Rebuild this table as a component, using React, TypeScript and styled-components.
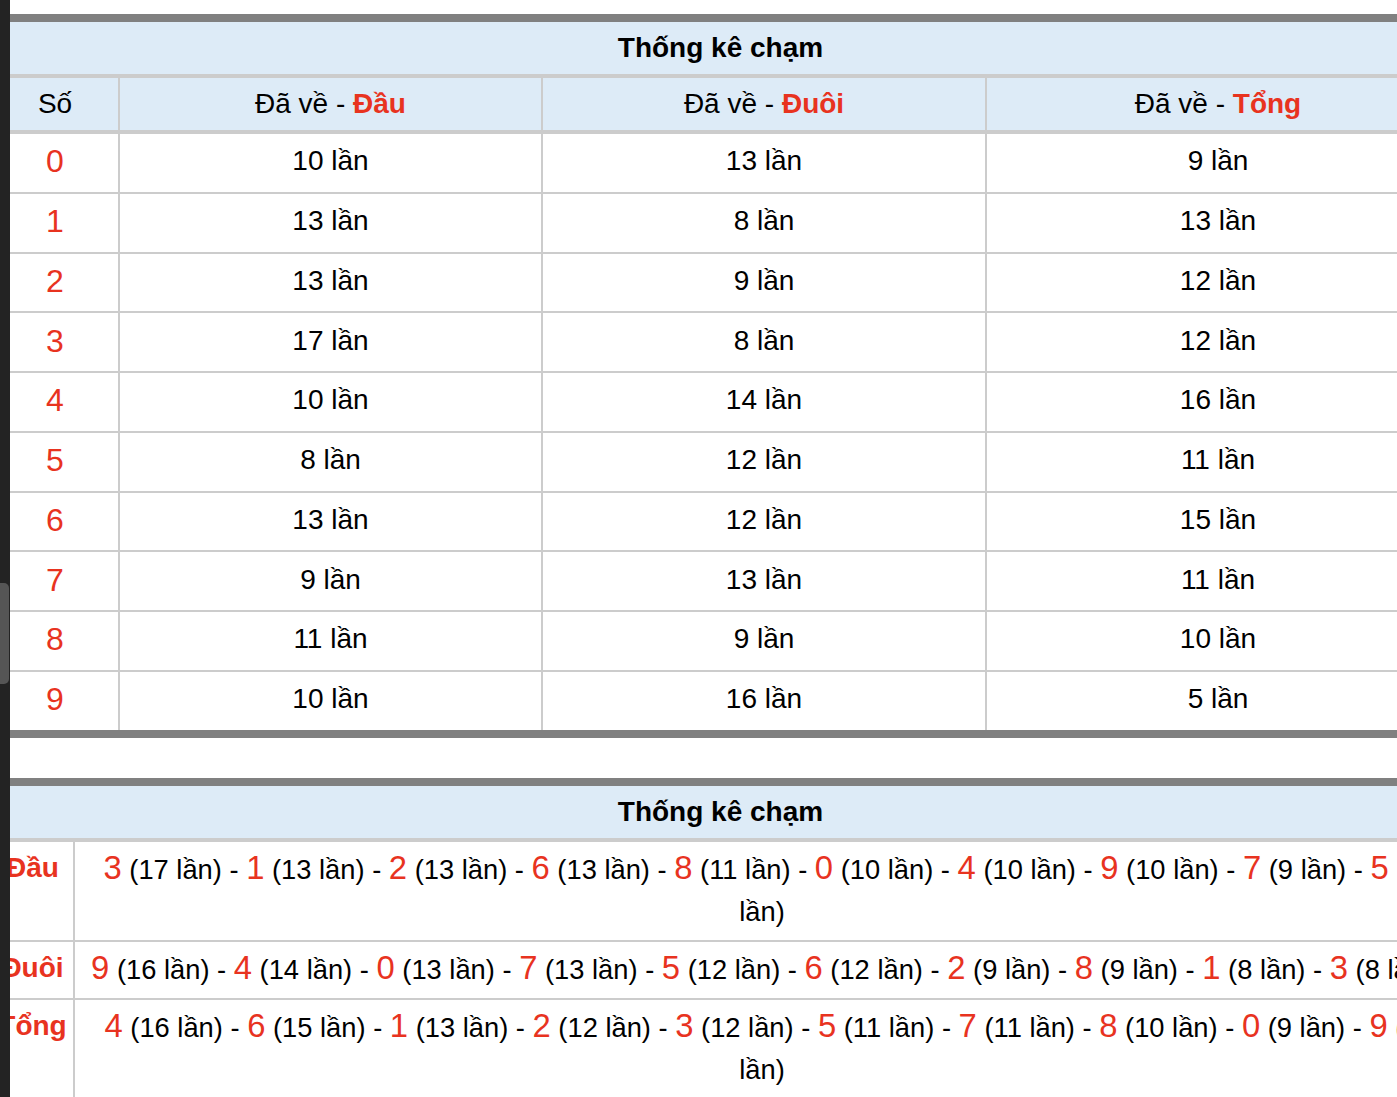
import React from "react";
import styled, { createGlobalStyle } from "styled-components";

const RED = "#e8331f";
const BLUE = "#ddebf7";
const GRID = "#cccccc";
const BAR = "#808080";

const GlobalStyle = createGlobalStyle`
  html, body {
    margin: 0;
    padding: 0;
    background: #ffffff;
    overflow: hidden;
  }
  body {
    font-family: "Liberation Sans", Arial, Helvetica, sans-serif;
    color: #000;
  }
`;

const Page = styled.div`
  width: 1457px;
  margin-left: -8px;
  padding-top: 14px;
  display: flex;
  flex-direction: column;
  gap: 40px;
`;

const EdgeStrip = styled.div`
  position: fixed;
  left: 0;
  top: 0;
  width: 10px;
  height: 100%;
  background: #232323;
  z-index: 5;
`;

const EdgeThumb = styled.div`
  position: absolute;
  left: 0;
  top: 583px;
  width: 9px;
  height: 101px;
  background: #555555;
  border-radius: 0 5px 5px 0;
`;

const Table = styled.table<{ $open?: boolean }>`
  width: 1457px;
  table-layout: fixed;
  border-collapse: separate;
  border-spacing: 0;
  border-top: 8px solid ${BAR};
  border-bottom: ${(p) => (p.$open ? "none" : `8px solid ${BAR}`)};
`;

const Col = styled.col<{ $w: number }>`
  width: ${(p) => p.$w}px;
`;

const TitleCell = styled.th`
  background: ${BLUE};
  font-size: 28px;
  font-weight: 700;
  line-height: 52px;
  padding: 0;
  text-align: center;
  border-bottom: 4px solid ${GRID};
`;

const HeadCell = styled.th<{ $first?: boolean }>`
  box-sizing: border-box;
  background: ${BLUE};
  font-size: 28px;
  font-weight: 400;
  line-height: 52px;
  padding: 0;
  text-align: center;
  white-space: nowrap;
  border-bottom: 4px solid ${GRID};
  border-left: ${(p) => (p.$first ? "none" : `2px solid ${GRID}`)};
`;

const Accent = styled.span`
  color: ${RED};
  font-weight: 700;
`;

const DataCell = styled.td<{ $first?: boolean; $last?: boolean }>`
  box-sizing: content-box;
  height: 54.75px;
  font-size: 28px;
  line-height: 1;
  padding: 0 0 3px;
  text-align: center;
  vertical-align: middle;
  white-space: nowrap;
  border-bottom: ${(p) => (p.$last ? "none" : `2px solid ${GRID}`)};
  border-left: ${(p) => (p.$first ? "none" : `2px solid ${GRID}`)};
`;

const Num = styled.span<{ $size: number }>`
  color: ${RED};
  font-size: ${(p) => p.$size}px;
  line-height: 1;
`;

const LabelCell = styled.th<{ $last?: boolean }>`
  box-sizing: border-box;
  color: ${RED};
  font-size: 28px;
  font-weight: 700;
  line-height: 42px;
  padding: 5px 0 7px;
  text-align: center;
  vertical-align: top;
  white-space: nowrap;
  border-bottom: ${(p) => (p.$last ? "none" : `2px solid ${GRID}`)};
`;

const ListCell = styled.td<{ $last?: boolean }>`
  box-sizing: border-box;
  font-size: 27.3px;
  line-height: 42px;
  padding: 7px 8px;
  text-align: center;
  vertical-align: middle;
  border-left: 2px solid ${GRID};
  border-bottom: ${(p) => (p.$last ? "none" : `2px solid ${GRID}`)};
`;

const dau = [10, 13, 13, 17, 10, 8, 13, 9, 11, 10];
const duoi = [13, 8, 9, 8, 14, 12, 12, 13, 9, 16];
const tong = [9, 13, 12, 12, 16, 11, 15, 11, 10, 5];

const sorted = (arr: number[]) =>
  arr
    .map((v, i) => ({ d: i, v }))
    .sort((a, b) => b.v - a.v || a.d - b.d);

const lists = [
  { label: "Đầu", items: sorted(dau) },
  { label: "Đuôi", items: sorted(duoi) },
  { label: "Tổng", items: sorted(tong) },
];

export default function App() {
  return (
    <>
      <GlobalStyle />
      <EdgeStrip>
        <EdgeThumb />
      </EdgeStrip>
      <Page>
        <Table>
          <colgroup>
            <Col $w={126} />
            <Col $w={423} />
            <Col $w={444} />
            <Col $w={464} />
          </colgroup>
          <thead>
            <tr>
              <TitleCell colSpan={4}>Thống kê chạm</TitleCell>
            </tr>
            <tr>
              <HeadCell $first>Số</HeadCell>
              <HeadCell>
                Đã về - <Accent>Đầu</Accent>
              </HeadCell>
              <HeadCell>
                Đã về - <Accent>Đuôi</Accent>
              </HeadCell>
              <HeadCell>
                Đã về - <Accent>Tổng</Accent>
              </HeadCell>
            </tr>
          </thead>
          <tbody>
            {dau.map((_, i) => {
              const last = i === dau.length - 1;
              return (
                <tr key={i}>
                  <DataCell $first $last={last}>
                    <Num $size={32}>{i}</Num>
                  </DataCell>
                  <DataCell $last={last}>{dau[i]} lần</DataCell>
                  <DataCell $last={last}>{duoi[i]} lần</DataCell>
                  <DataCell $last={last}>{tong[i]} lần</DataCell>
                </tr>
              );
            })}
          </tbody>
        </Table>

        <Table $open>
          <colgroup>
            <Col $w={81} />
            <Col $w={1376} />
          </colgroup>
          <thead>
            <tr>
              <TitleCell colSpan={2}>Thống kê chạm</TitleCell>
            </tr>
          </thead>
          <tbody>
            {lists.map((row, r) => {
              const last = r === lists.length - 1;
              return (
                <tr key={row.label}>
                  <LabelCell $last={last}>{row.label}</LabelCell>
                  <ListCell $last={last}>
                    {row.items.map((it, k) => (
                      <React.Fragment key={it.d}>
                        {k > 0 && " - "}
                        <Num $size={32.8}>{it.d}</Num> ({it.v} lần)
                      </React.Fragment>
                    ))}
                  </ListCell>
                </tr>
              );
            })}
          </tbody>
        </Table>
      </Page>
    </>
  );
}
